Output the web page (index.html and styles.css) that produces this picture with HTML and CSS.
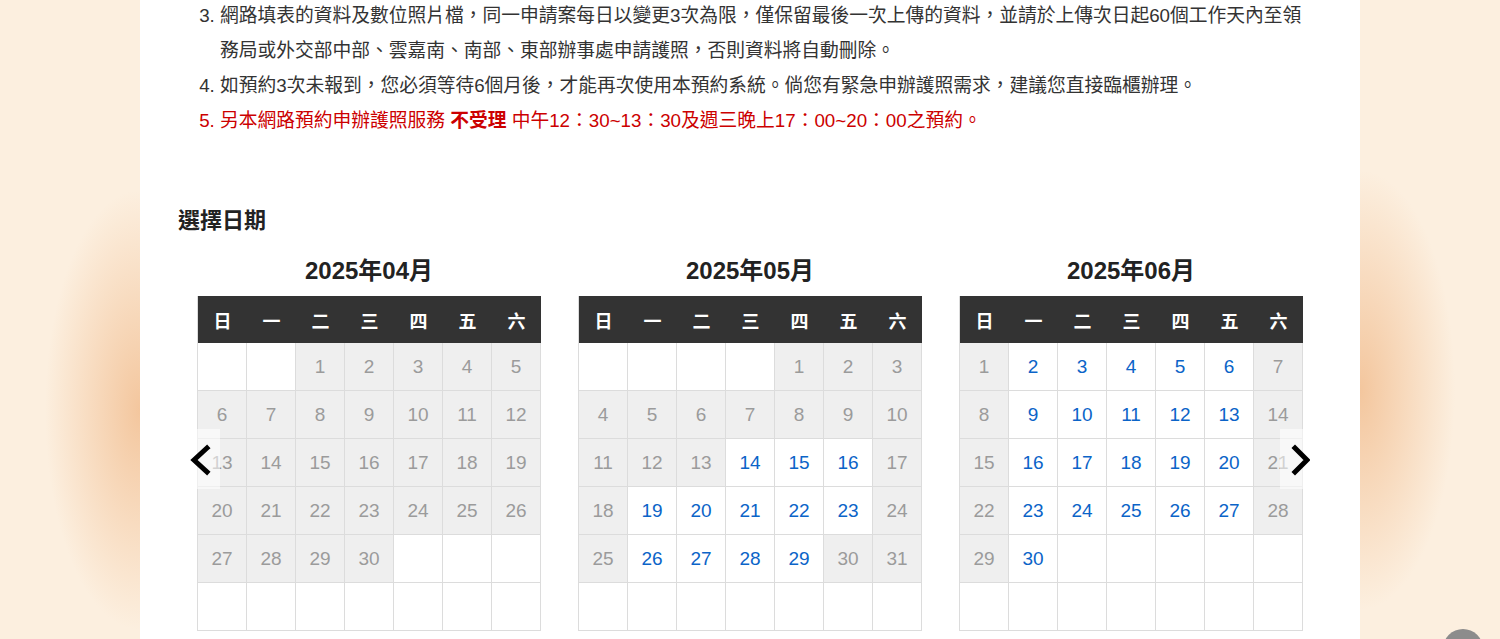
FILE: index.html
```html
<!DOCTYPE html>
<html lang="zh-Hant">
<head>
<meta charset="utf-8">
<title>選擇日期</title>
<link rel="stylesheet" href="styles.css">
</head>
<body>
<main class="panel">
  <ol class="notes" start="3">
    <li>網路填表的資料及數位照片檔，同一申請案每日以變更3次為限，僅保留最後一次上傳的資料，並請於上傳次日起60個工作天內至領務局或外交部中部、雲嘉南、南部、東部辦事處申請護照，否則資料將自動刪除。</li>
    <li>如預約3次未報到，您必須等待6個月後，才能再次使用本預約系統。倘您有緊急申辦護照需求，建議您直接臨櫃辦理。</li>
    <li class="warn">另本網路預約申辦護照服務 <strong>不受理</strong> 中午12：30~13：30及週三晚上17：00~20：00之預約。</li>
  </ol>

  <h2 class="section-title">選擇日期</h2>

  <section class="calendars">
    <div class="month">
      <h3 class="month-title">2025年04月</h3>
      <div class="grid">
        <div class="hd">日</div><div class="hd">一</div><div class="hd">二</div><div class="hd">三</div><div class="hd">四</div><div class="hd">五</div><div class="hd">六</div>
        <div class="c"></div><div class="c"></div><div class="c off">1</div><div class="c off">2</div><div class="c off">3</div><div class="c off">4</div><div class="c off">5</div>
        <div class="c off">6</div><div class="c off">7</div><div class="c off">8</div><div class="c off">9</div><div class="c off">10</div><div class="c off">11</div><div class="c off">12</div>
        <div class="c off">13</div><div class="c off">14</div><div class="c off">15</div><div class="c off">16</div><div class="c off">17</div><div class="c off">18</div><div class="c off">19</div>
        <div class="c off">20</div><div class="c off">21</div><div class="c off">22</div><div class="c off">23</div><div class="c off">24</div><div class="c off">25</div><div class="c off">26</div>
        <div class="c off">27</div><div class="c off">28</div><div class="c off">29</div><div class="c off">30</div><div class="c"></div><div class="c"></div><div class="c"></div>
        <div class="c"></div><div class="c"></div><div class="c"></div><div class="c"></div><div class="c"></div><div class="c"></div><div class="c"></div>
      </div>
    </div>

    <div class="month">
      <h3 class="month-title">2025年05月</h3>
      <div class="grid">
        <div class="hd">日</div><div class="hd">一</div><div class="hd">二</div><div class="hd">三</div><div class="hd">四</div><div class="hd">五</div><div class="hd">六</div>
        <div class="c"></div><div class="c"></div><div class="c"></div><div class="c"></div><div class="c off">1</div><div class="c off">2</div><div class="c off">3</div>
        <div class="c off">4</div><div class="c off">5</div><div class="c off">6</div><div class="c off">7</div><div class="c off">8</div><div class="c off">9</div><div class="c off">10</div>
        <div class="c off">11</div><div class="c off">12</div><div class="c off">13</div><div class="c on">14</div><div class="c on">15</div><div class="c on">16</div><div class="c off">17</div>
        <div class="c off">18</div><div class="c on">19</div><div class="c on">20</div><div class="c on">21</div><div class="c on">22</div><div class="c on">23</div><div class="c off">24</div>
        <div class="c off">25</div><div class="c on">26</div><div class="c on">27</div><div class="c on">28</div><div class="c on">29</div><div class="c off">30</div><div class="c off">31</div>
        <div class="c"></div><div class="c"></div><div class="c"></div><div class="c"></div><div class="c"></div><div class="c"></div><div class="c"></div>
      </div>
    </div>

    <div class="month">
      <h3 class="month-title">2025年06月</h3>
      <div class="grid">
        <div class="hd">日</div><div class="hd">一</div><div class="hd">二</div><div class="hd">三</div><div class="hd">四</div><div class="hd">五</div><div class="hd">六</div>
        <div class="c off">1</div><div class="c on">2</div><div class="c on">3</div><div class="c on">4</div><div class="c on">5</div><div class="c on">6</div><div class="c off">7</div>
        <div class="c off">8</div><div class="c on">9</div><div class="c on">10</div><div class="c on">11</div><div class="c on">12</div><div class="c on">13</div><div class="c off">14</div>
        <div class="c off">15</div><div class="c on">16</div><div class="c on">17</div><div class="c on">18</div><div class="c on">19</div><div class="c on">20</div><div class="c off">21</div>
        <div class="c off">22</div><div class="c on">23</div><div class="c on">24</div><div class="c on">25</div><div class="c on">26</div><div class="c on">27</div><div class="c off">28</div>
        <div class="c off">29</div><div class="c on">30</div><div class="c"></div><div class="c"></div><div class="c"></div><div class="c"></div><div class="c"></div>
        <div class="c"></div><div class="c"></div><div class="c"></div><div class="c"></div><div class="c"></div><div class="c"></div><div class="c"></div>
      </div>
    </div>

    <button class="nav prev" aria-label="上一月">
      <svg width="40" height="60" viewBox="0 0 40 60"><polyline points="22,19 9,31 22,43" fill="none" stroke="#000" stroke-width="5" stroke-linecap="square" stroke-linejoin="miter"/></svg>
    </button>
    <button class="nav next" aria-label="下一月">
      <svg width="40" height="60" viewBox="0 0 40 60"><polyline points="25,19 37,31 25,43" fill="none" stroke="#000" stroke-width="5" stroke-linecap="square" stroke-linejoin="miter"/></svg>
    </button>
  </section>
</main>
<a class="to-top" href="#" aria-label="回到頂端"></a>
</body>
</html>
```

FILE: styles.css
```css
html, body {
  margin: 0;
  padding: 0;
}

body {
  height: 639px;
  overflow: hidden;
  font-family: "Liberation Sans", "Noto Sans CJK TC", sans-serif;
  color: #333;
  background-color: #fcefdf;
  background-image:
    radial-gradient(ellipse 95px 220px at 140px 410px, rgba(243, 196, 154, 0.95), rgba(252, 239, 223, 0) 100%),
    radial-gradient(ellipse 95px 220px at 1360px 390px, rgba(243, 196, 154, 0.95), rgba(252, 239, 223, 0) 100%);
}

.panel {
  display: flow-root;
  width: 1220px;
  height: 639px;
  margin: 0 auto;
  background: #fff;
  padding: 0 0 0 38px;
  box-sizing: border-box;
}

.notes {
  margin: -2px 0 0 0;
  padding: 0 48px 0 42px;
  font-size: 18.75px;
  line-height: 35px;
}

.notes .warn {
  color: #cc0000;
}

.notes strong {
  font-weight: 700;
}

.section-title {
  margin: 68px 0 0 0;
  font-size: 22px;
  line-height: 30px;
  font-weight: 700;
  color: #222;
}

.calendars {
  position: relative;
  margin: 18px 0 0 19px;
  width: 1106px;
  display: flex;
  justify-content: space-between;
}

.month {
  width: 344px;
}

.month-title {
  margin: 0 0 8px 0;
  text-align: center;
  font-size: 24px;
  line-height: 34px;
  font-weight: 700;
  color: #222;
}

.grid {
  display: grid;
  grid-template-columns: repeat(7, 49px);
  grid-template-rows: 47px repeat(6, 48px);
  border-left: 1px solid #dcdcdc;
  width: 343px;
}

.hd {
  background: #333;
  color: #fff;
  font-family: "Noto Sans CJK TC", sans-serif;
  font-weight: 700;
  font-size: 18px;
  display: flex;
  align-items: center;
  justify-content: center;
}

.c {
  border-right: 1px solid #dcdcdc;
  border-bottom: 1px solid #dcdcdc;
  background: #fff;
  display: flex;
  align-items: center;
  justify-content: center;
  font-size: 19px;
}

.c.off {
  background: #efefef;
  color: #9b9b9b;
}

.c.on {
  color: #0b64c8;
}

.nav {
  position: absolute;
  top: 175px;
  width: 23px;
  height: 60px;
  padding: 0;
  border: 0;
  background: rgba(255, 255, 255, 0.55);
  overflow: visible;
  cursor: pointer;
}

.nav svg {
  position: absolute;
  top: 0;
  display: block;
}

.nav.prev {
  left: 0;
}

.nav.prev svg {
  left: -12px;
}

.nav.next {
  right: 0;
}

.nav.next svg {
  left: -10px;
}

.to-top {
  position: fixed;
  left: 1443px;
  top: 629px;
  width: 40px;
  height: 40px;
  border-radius: 50%;
  background: #8c8c8c;
}
```
